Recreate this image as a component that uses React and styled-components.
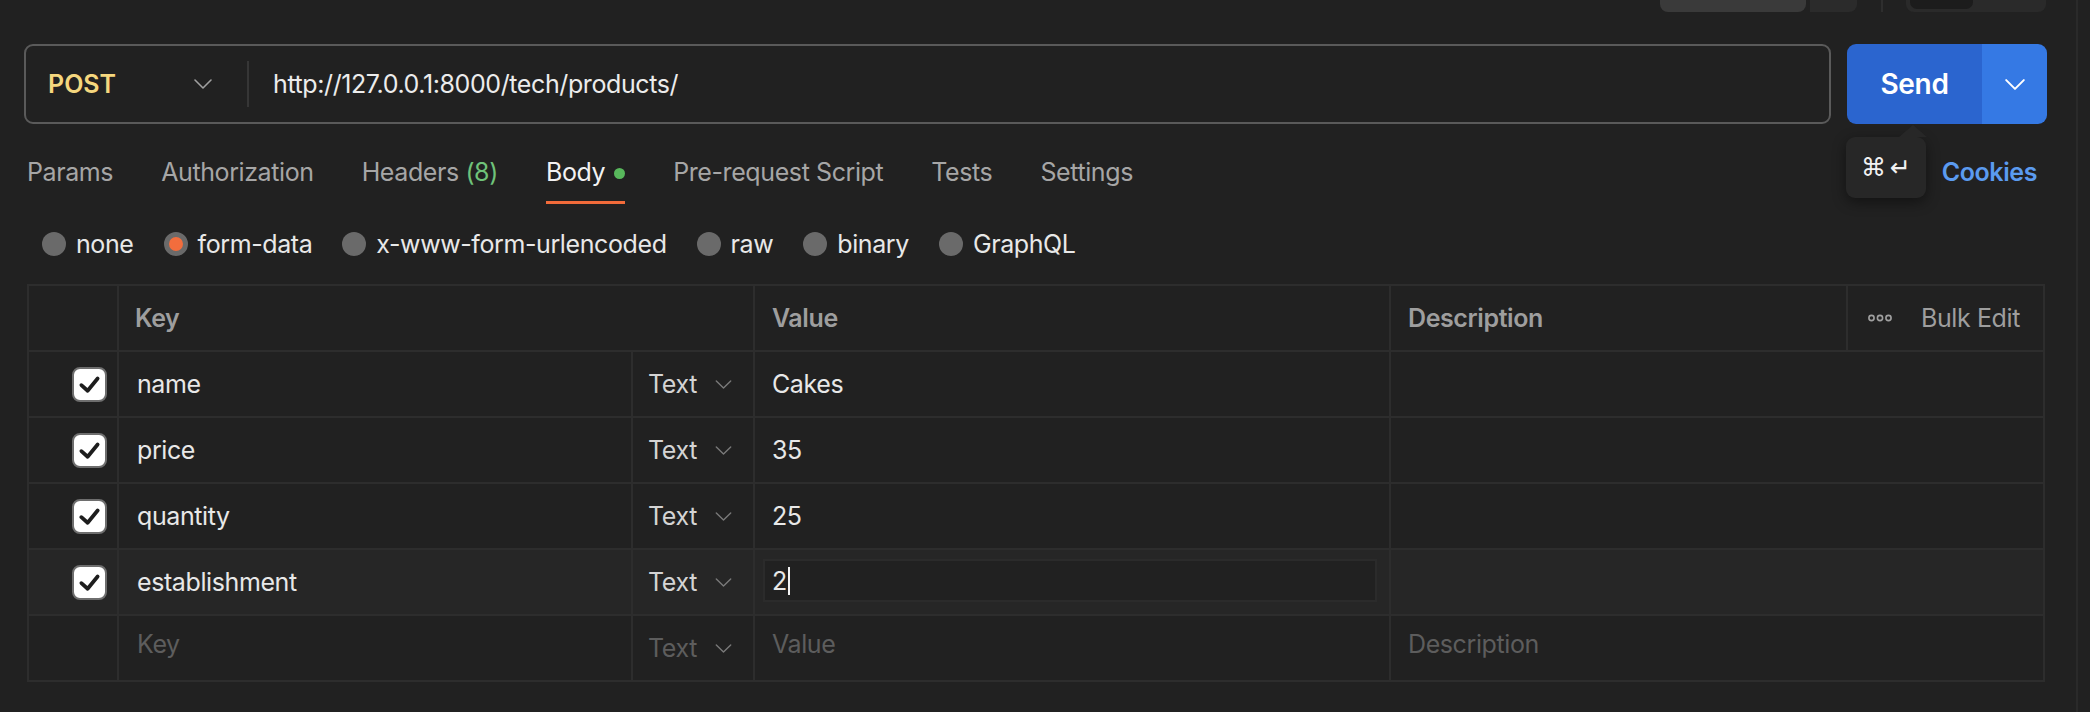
import React from "react";
import styled, { createGlobalStyle, css } from "styled-components";

const GlobalStyle = createGlobalStyle`
  html, body {
    margin: 0;
    padding: 0;
    background: #212121;
    overflow: hidden;
  }
  body {
    font-family: Inter, "Noto Sans", "Liberation Sans", sans-serif;
    color: #e8e8e8;
  }
  * { box-sizing: border-box; }
`;

// base text size used across the panel (13px ui at 2x)
const bodyText = css`
  font-size: 25px;
  letter-spacing: -0.4px;
`;

const Page = styled.div`
  display: flex;
  width: 2090px;
  height: 712px;
  background: #212121;
`;

const Main = styled.div`
  width: 2076px;
  padding: 0 29px 0 24px;
  display: flex;
  flex-direction: column;
`;

const SideRail = styled.div`
  flex: 1;
  border-left: 2px solid #2a2a2a;
`;

/* partially visible toolbar cut off at the top edge */
const TopStrip = styled.div`
  height: 12px;
  display: flex;
  justify-content: flex-end;
  padding-right: 1px;
`;

const StripButton = styled.div`
  width: ${({ $w }) => $w}px;
  background: ${({ $bg }) => $bg};
  border-radius: ${({ $radius }) => $radius};
  margin-left: ${({ $gap }) => $gap || 0}px;
`;

const StripDivider = styled.div`
  width: 2px;
  background: #2e2e2e;
  margin: 0 23px 0 24px;
`;

const StripToggle = styled.div`
  width: 140px;
  background: #2a2a2a;
  border-radius: 0 0 8px 8px;
  padding: 0 4px 3px;
  display: flex;
`;

const ToggleKnob = styled.div`
  width: 63px;
  background: #1c1c1c;
  border-radius: 0 0 7px 7px;
`;

const RequestRow = styled.div`
  display: flex;
  gap: 16px;
  margin-top: 32px;
  height: 80px;
`;

const UrlBox = styled.div`
  flex: 1;
  display: flex;
  align-items: center;
  border: 2px solid #5a5a5a;
  border-radius: 9px;
`;

const MethodSelect = styled.div`
  width: 221px;
  display: flex;
  align-items: center;
  justify-content: space-between;
  padding: 0 35px 0 22px;
`;

const MethodLabel = styled.span`
  font-size: 25px;
  font-weight: 600;
  color: #f5d77e;
`;

const UrlDivider = styled.div`
  width: 2px;
  height: 46px;
  background: #363636;
`;

const UrlText = styled.div`
  ${bodyText};
  padding-left: 24px;
  color: #ececec;
`;

const SendGroup = styled.div`
  position: relative;
  width: 200px;
  display: flex;
`;

const SendButton = styled.div`
  width: 135px;
  display: flex;
  align-items: center;
  justify-content: center;
  background: #2b65cf;
  border-radius: 9px 0 0 9px;
  font-size: 28px;
  font-weight: 600;
  letter-spacing: -0.3px;
  color: #ffffff;
`;

const SendMore = styled.div`
  flex: 1;
  display: flex;
  align-items: center;
  justify-content: center;
  background: #3579e4;
  border-radius: 0 9px 9px 0;
`;

const Tooltip = styled.div`
  position: absolute;
  top: 93px;
  left: -1px;
  width: 80px;
  height: 61px;
  background: #272727;
  border-radius: 9px;
  box-shadow: 0 4px 14px rgba(0, 0, 0, 0.45);
  display: flex;
  align-items: center;
  justify-content: center;
  gap: 4px;
  font-family: "DejaVu Sans", sans-serif;
  font-size: 25px;
  color: #f2f2f2;
  z-index: 2;

  &::before {
    content: "";
    position: absolute;
    top: -12px;
    left: 53px;
    border-left: 14px solid transparent;
    border-right: 14px solid transparent;
    border-bottom: 12px solid #272727;
  }
`;

const TabBar = styled.div`
  display: flex;
  align-items: flex-end;
  gap: 48px;
  margin-top: 22px;
  padding-left: 3px;
  height: 58px;
`;

const Tab = styled.div`
  ${bodyText};
  padding: 9px 0 15px;
  line-height: 28px;
  color: ${({ $active }) => ($active ? "#f2f2f2" : "#a6a6a6")};
  border-bottom: 3px solid ${({ $active }) => ($active ? "#f26b3a" : "transparent")};
  display: flex;
  align-items: center;
  gap: 9px;
  white-space: nowrap;
`;

const Count = styled.span`
  color: #6fc27a;
`;

const GreenDot = styled.span`
  width: 11px;
  height: 11px;
  border-radius: 50%;
  background: #58b85c;
  margin-top: 2px;
`;

const CookiesLink = styled.div`
  ${bodyText};
  margin-left: auto;
  padding: 9px 10px 18px 0;
  line-height: 28px;
  font-weight: 600;
  color: #5b9bf0;
`;

const BodyTypes = styled.div`
  display: flex;
  align-items: center;
  gap: 30px;
  margin-top: 18px;
  height: 44px;
  padding-left: 18px;
`;

const RadioOption = styled.div`
  ${bodyText};
  display: flex;
  align-items: center;
  gap: 10px;
  color: #e8e8e8;
`;

const RadioDot = styled.span`
  width: 24px;
  height: 24px;
  border-radius: 50%;
  background: ${({ $checked }) => ($checked ? "#f26d3d" : "#6a6a6a")};
  border: ${({ $checked }) => ($checked ? "5px solid #6a6a6a" : "none")};
`;

const Table = styled.div`
  margin: 18px 2px 0 3px;
  border: 2px solid #2d2d2d;
`;

const Row = styled.div`
  display: grid;
  grid-template-columns: 88px 514px 122px 636px 457px 1fr;
  height: ${({ $header }) => ($header ? 64 : 66)}px;
  border-top: ${({ $header }) => ($header ? "none" : "2px solid #2d2d2d")};
  background: ${({ $hover }) => ($hover ? "#262626" : "transparent")};
`;

const Cell = styled.div`
  ${bodyText};
  display: flex;
  align-items: center;
  grid-column: ${({ $span }) => ($span ? `span ${$span}` : "auto")};
  border-left: ${({ $first }) => ($first ? "none" : "2px solid #2d2d2d")};
  padding-left: ${({ $pad }) => ($pad ?? 17)}px;
  padding-bottom: ${({ $lift }) => ($lift ? 8 : 0)}px;
  color: ${({ $muted }) => ($muted ? "#5d5d5d" : "#e8e8e8")};
  white-space: nowrap;
`;

const CheckCell = styled(Cell)`
  justify-content: flex-end;
  padding-right: 10px;
`;

const HeaderLabel = styled.span`
  font-weight: 600;
  color: #9e9e9e;
`;

const TypeCell = styled(Cell)`
  gap: 18px;
  color: ${({ $muted }) => ($muted ? "#5d5d5d" : "#d4d4d4")};
`;

const BulkCell = styled(Cell)`
  padding-left: 20px;
  gap: 29px;
  color: #9e9e9e;
`;

const ValueInputCell = styled(Cell)`
  padding: 9px 12px 12px 8px;
  align-items: stretch;
`;

const ValueInput = styled.div`
  flex: 1;
  display: flex;
  align-items: center;
  padding-left: 7px;
  background: #212121;
  border: 2px solid #2b2b2b;
`;

const Caret = styled.span`
  width: 2px;
  height: 28px;
  background: #f2f2f2;
  margin-left: 1px;
`;

const CheckBox = styled.span`
  width: 35px;
  height: 35px;
  border-radius: 8px;
  background: #ffffff;
  border: 2px solid #6e6e6e;
  display: flex;
  align-items: center;
  justify-content: center;
`;

const Chevron = ({ color = "#9a9a9a", w = 18, h = 10, sw = 1.6 }) => (
  <svg width={w} height={h} viewBox="0 0 18 10" fill="none">
    <polyline points="1,1 9,9 17,1" stroke={color} strokeWidth={sw} strokeLinecap="round" strokeLinejoin="round" />
  </svg>
);

const Check = () => (
  <CheckBox>
    <svg width="25" height="25" viewBox="0 0 16 16" fill="none">
      <polyline points="2.8,8.4 6.8,12 13.2,4.2" stroke="#1d1d1d" strokeWidth="2.4" strokeLinecap="round" strokeLinejoin="round" />
    </svg>
  </CheckBox>
);

const Dots = () => (
  <svg width="24" height="8" viewBox="0 0 24 8">
    <circle cx="3.5" cy="4" r="2.6" fill="none" stroke="#a0a0a0" strokeWidth="1.6" />
    <circle cx="12" cy="4" r="2.6" fill="none" stroke="#a0a0a0" strokeWidth="1.6" />
    <circle cx="20.5" cy="4" r="2.6" fill="none" stroke="#a0a0a0" strokeWidth="1.6" />
  </svg>
);

const tabs = ["Params", "Authorization", "Headers", "Body", "Pre-request Script", "Tests", "Settings"];
const bodyTypes = ["none", "form-data", "x-www-form-urlencoded", "raw", "binary", "GraphQL"];
const params = [
  { key: "name", value: "Cakes" },
  { key: "price", value: "35" },
  { key: "quantity", value: "25" },
  { key: "establishment", value: "2", editing: true },
];

const App = () => {
  return (
    <Page>
      <GlobalStyle />
      <Main>
        <TopStrip>
          <StripButton $w={146} $bg="#3a3a3a" $radius="0 0 8px 8px" />
          <StripButton $w={47} $bg="#2b2b2b" $radius="0 0 8px 0" $gap={4} />
          <StripDivider />
          <StripToggle>
            <ToggleKnob />
          </StripToggle>
        </TopStrip>

        <RequestRow>
          <UrlBox>
            <MethodSelect>
              <MethodLabel>POST</MethodLabel>
              <Chevron color="#a0a0a0" />
            </MethodSelect>
            <UrlDivider />
            <UrlText>http://127.0.0.1:8000/tech/products/</UrlText>
          </UrlBox>
          <SendGroup>
            <SendButton>Send</SendButton>
            <SendMore>
              <Chevron color="#ffffff" w={20} h={11} sw={1.8} />
            </SendMore>
            <Tooltip>
              <span>⌘</span>
              <span>↵</span>
            </Tooltip>
          </SendGroup>
        </RequestRow>

        <TabBar>
          {tabs.map((t) => (
            <Tab key={t} $active={t === "Body"}>
              {t === "Headers" ? (
                <span>
                  Headers <Count>(8)</Count>
                </span>
              ) : (
                t
              )}
              {t === "Body" && <GreenDot />}
            </Tab>
          ))}
          <CookiesLink>Cookies</CookiesLink>
        </TabBar>

        <BodyTypes>
          {bodyTypes.map((b) => (
            <RadioOption key={b}>
              <RadioDot $checked={b === "form-data"} />
              {b}
            </RadioOption>
          ))}
        </BodyTypes>

        <Table>
          <Row $header>
            <Cell $first />
            <Cell $span={2} $pad={16}>
              <HeaderLabel>Key</HeaderLabel>
            </Cell>
            <Cell>
              <HeaderLabel>Value</HeaderLabel>
            </Cell>
            <Cell>
              <HeaderLabel>Description</HeaderLabel>
            </Cell>
            <BulkCell>
              <Dots />
              Bulk Edit
            </BulkCell>
          </Row>

          {params.map((p) => (
            <Row key={p.key} $hover={p.editing}>
              <CheckCell $first>
                <Check />
              </CheckCell>
              <Cell $pad={18}>{p.key}</Cell>
              <TypeCell $pad={15}>
                Text
                <Chevron color="#7a7a7a" w={17} h={9} sw={1.5} />
              </TypeCell>
              {p.editing ? (
                <ValueInputCell>
                  <ValueInput>
                    {p.value}
                    <Caret />
                  </ValueInput>
                </ValueInputCell>
              ) : (
                <Cell>{p.value}</Cell>
              )}
              <Cell $span={2} />
            </Row>
          ))}

          <Row>
            <Cell $first />
            <Cell $pad={18} $muted $lift>
              Key
            </Cell>
            <TypeCell $pad={15} $muted>
              Text
              <Chevron color="#7a7a7a" w={17} h={9} sw={1.5} />
            </TypeCell>
            <Cell $muted $lift>
              Value
            </Cell>
            <Cell $span={2} $pad={17} $muted $lift>
              Description
            </Cell>
          </Row>
        </Table>
      </Main>
      <SideRail />
    </Page>
  );
};

export default App;
